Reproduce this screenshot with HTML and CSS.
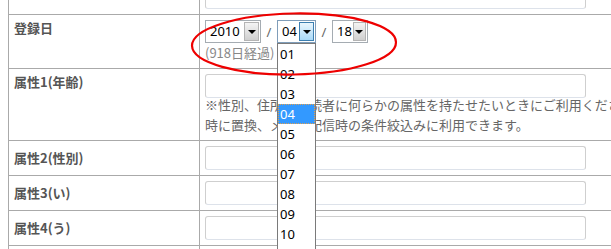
FILE: index.html
```html
<!DOCTYPE html>
<html lang="ja">
<head>
<meta charset="utf-8">
<title>登録情報</title>
<link rel="stylesheet" href="styles.css">
</head>
<body>
<div class="page">
<table class="form">
  <tr>
    <th></th>
    <td><div class="inp"></div></td>
  </tr>
  <tr class="top">
    <th>登録日</th>
    <td>
      <div class="dates">
        <div class="sel w1"><span class="v">2010</span><span class="btn"><i class="tri"></i></span></div>
        <span class="slash">/</span>
        <div class="sel w2 open"><span class="v">04</span><span class="btn"><i class="tri"></i></span>
          <ul class="list">
            <li>01</li><li>02</li><li>03</li><li class="hl">04</li><li>05</li><li>06</li>
            <li>07</li><li>08</li><li>09</li><li>10</li><li>11</li><li>12</li>
          </ul>
        </div>
        <span class="slash">/</span>
        <div class="sel w3"><span class="v">18</span><span class="btn"><i class="tri"></i></span></div>
        <svg class="mark" width="210" height="66" viewBox="0 0 210 66">
          <ellipse cx="104" cy="33" rx="102" ry="30.5" transform="rotate(-1 104 33)" />
        </svg>
      </div>
      <div class="elapsed">(918日経過)</div>
    </td>
  </tr>
  <tr class="top">
    <th>属性1(年齢)</th>
    <td>
      <div class="inp"></div>
      <p class="note">※性別、住所など読者に何らかの属性を持たせたいときにご利用ください。メール本文作成<br>時に置換、メール配信時の条件絞込みに利用できます。</p>
    </td>
  </tr>
  <tr>
    <th>属性2(性別)</th>
    <td><div class="inp"></div></td>
  </tr>
  <tr>
    <th>属性3(い)</th>
    <td><div class="inp"></div></td>
  </tr>
  <tr>
    <th>属性4(う)</th>
    <td><div class="inp"></div></td>
  </tr>
  <tr>
    <th>属性5(え)</th>
    <td><div class="inp"></div></td>
  </tr>
</table>
</div>
</body>
</html>
```
FILE: styles.css
```css
html, body {
  margin: 0;
  padding: 0;
  background: #fff;
  overflow: hidden;
}
body {
  width: 611px;
  height: 249px;
  font-family: "Noto Sans CJK JP", sans-serif;
}
.page {
  padding-left: 8px;
}
.form {
  border-collapse: collapse;
  width: 800px;
  margin-top: -21px;
}
.form th,
.form td {
  border: 1px solid #aaaaaa;
  padding: 5px;
  text-align: left;
  vertical-align: top;
}
.form th {
  width: 180px;
  font-size: 13px;
  font-weight: bold;
  color: #555;
  line-height: 18px;
  vertical-align: middle;
}
.form tr.top th {
  vertical-align: top;
  padding-top: 4px;
}
.inp {
  box-sizing: border-box;
  width: 381px;
  height: 24px;
  border: 1px solid #cfcfcf;
  border-bottom-color: #dde2ea;
  border-radius: 3px;
  background: #fff;
}
.dates {
  position: relative;
  display: flex;
  align-items: center;
  height: 23px;
}
.sel {
  position: relative;
  box-sizing: border-box;
  height: 23px;
  display: flex;
  align-items: stretch;
  border: 1px solid #a5acb2;
  background: #fff;
  font-family: "Noto Sans", sans-serif;
  font-size: 13px;
  color: #000;
}
.sel .v {
  flex: 1;
  padding-left: 4px;
  line-height: 21px;
}
.sel .btn {
  width: 15px;
  margin: 1px;
  border: 1px solid #b4b4b4;
  box-sizing: border-box;
  background: linear-gradient(#f4f4f4, #cfcfcf);
  display: flex;
  align-items: center;
  justify-content: center;
}
.tri {
  width: 0;
  height: 0;
  border-left: 4px solid transparent;
  border-right: 4px solid transparent;
  border-top: 4px solid #000;
}
.w1 { width: 56px; }
.w2 { width: 39px; }
.w3 { width: 36px; }
.open {
  border-color: #7f9db9;
}
.open .btn {
  border-color: #3c7fb1;
  background: linear-gradient(#eaf6fd, #a9d9f8);
}
.slash {
  width: 16px;
  text-align: center;
  font-family: "Noto Sans", sans-serif;
  font-size: 13px;
  color: #666;
}
.list {
  position: absolute;
  left: -1px;
  top: 22px;
  z-index: 5;
  margin: 0;
  padding: 0;
  list-style: none;
  width: 39px;
  box-sizing: border-box;
  border: 1px solid #7a7a7a;
  background: #fff;
}
.list li {
  height: 20px;
  line-height: 20px;
  padding-left: 2px;
  box-sizing: border-box;
}
.list li.hl {
  background: #3399ff;
  color: #fff;
  outline: 1px dotted #e0a050;
  outline-offset: -1px;
}
.mark {
  position: absolute;
  left: -15px;
  top: -9px;
  z-index: 10;
  overflow: visible;
  pointer-events: none;
}
.mark ellipse {
  fill: none;
  stroke: #ee0000;
  stroke-width: 2.2;
}
.elapsed {
  font-size: 13px;
  line-height: 20px;
  color: #888;
}
.note {
  margin: -3px 0 0;
  font-size: 13px;
  line-height: 20px;
  color: #666;
  white-space: nowrap;
}
```
